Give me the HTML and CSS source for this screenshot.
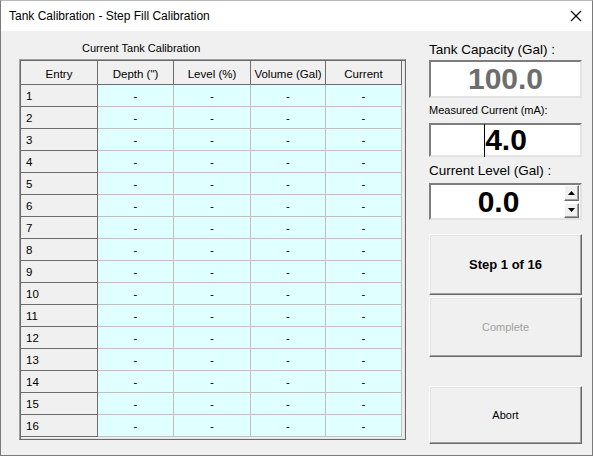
FILE: index.html
```html
<!DOCTYPE html>
<html lang="en">
<head>
    <meta charset="UTF-8">
    <link rel="stylesheet" href="styles.css">
    <title>Tank Calibration - Step Fill Calibration</title>
</head>
<body>
    <div class="window">
        <div class="titlebar">
            <span class="title">Tank Calibration - Step Fill Calibration</span>
            <svg class="close" width="12" height="12" viewBox="0 0 12 12">
                <path d="M1 1 L11 11 M11 1 L1 11" stroke="#000" stroke-width="1.1"/>
            </svg>
        </div>

        <div class="content">
            <div class="left">
                <div class="caption">Current Tank Calibration</div>
                <div class="grid-frame">
                    <div class="grid">
                        <div class="hd">Entry</div><div class="hd">Depth (")</div><div class="hd">Level (%)</div><div class="hd">Volume (Gal)</div><div class="hd">Current</div>
                        <div class="no">1</div><div class="cell">-</div><div class="cell">-</div><div class="cell">-</div><div class="cell">-</div>
                        <div class="no">2</div><div class="cell">-</div><div class="cell">-</div><div class="cell">-</div><div class="cell">-</div>
                        <div class="no">3</div><div class="cell">-</div><div class="cell">-</div><div class="cell">-</div><div class="cell">-</div>
                        <div class="no">4</div><div class="cell">-</div><div class="cell">-</div><div class="cell">-</div><div class="cell">-</div>
                        <div class="no">5</div><div class="cell">-</div><div class="cell">-</div><div class="cell">-</div><div class="cell">-</div>
                        <div class="no">6</div><div class="cell">-</div><div class="cell">-</div><div class="cell">-</div><div class="cell">-</div>
                        <div class="no">7</div><div class="cell">-</div><div class="cell">-</div><div class="cell">-</div><div class="cell">-</div>
                        <div class="no">8</div><div class="cell">-</div><div class="cell">-</div><div class="cell">-</div><div class="cell">-</div>
                        <div class="no">9</div><div class="cell">-</div><div class="cell">-</div><div class="cell">-</div><div class="cell">-</div>
                        <div class="no">10</div><div class="cell">-</div><div class="cell">-</div><div class="cell">-</div><div class="cell">-</div>
                        <div class="no">11</div><div class="cell">-</div><div class="cell">-</div><div class="cell">-</div><div class="cell">-</div>
                        <div class="no">12</div><div class="cell">-</div><div class="cell">-</div><div class="cell">-</div><div class="cell">-</div>
                        <div class="no">13</div><div class="cell">-</div><div class="cell">-</div><div class="cell">-</div><div class="cell">-</div>
                        <div class="no">14</div><div class="cell">-</div><div class="cell">-</div><div class="cell">-</div><div class="cell">-</div>
                        <div class="no">15</div><div class="cell">-</div><div class="cell">-</div><div class="cell">-</div><div class="cell">-</div>
                        <div class="no">16</div><div class="cell">-</div><div class="cell">-</div><div class="cell">-</div><div class="cell">-</div>
                    </div>
                </div>
            </div>

            <div class="right">
                <div class="label big">Tank Capacity (Gal) :</div>
                <div class="box value gray">100.0</div>

                <div class="label small">Measured Current (mA):</div>
                <div class="box value"><span class="caret"></span>4.0</div>

                <div class="label big lvl">Current Level (Gal) :</div>
                <div class="box spin">
                    <div class="value">0.0</div>
                    <div class="spin-btns">
                        <div class="spin-btn">
                            <svg width="7" height="4" viewBox="0 0 7 4"><path d="M3.5 0 L7 4 L0 4 Z" fill="#000"/></svg>
                        </div>
                        <div class="spin-btn">
                            <svg width="7" height="4" viewBox="0 0 7 4"><path d="M0 0 L7 0 L3.5 4 Z" fill="#000"/></svg>
                        </div>
                    </div>
                </div>

                <button class="btn step">Step 1 of 16</button>
                <button class="btn complete" disabled>Complete</button>
                <button class="btn abort">Abort</button>
            </div>
        </div>
    </div>
</body>
</html>
```

FILE: styles.css
```css
*{
    box-sizing: border-box;
}

body{
    margin: 0;
    background-color: #f0f0f0;
    font-family: "Liberation Sans", Arial, sans-serif;
}

.window{
    width: 593px;
    height: 456px;
    border: 1px solid #7a7a7a;
    border-top-color: #b9b9b9;
    background-color: #f0f0f0;
}

.titlebar{
    height: 30px;
    background-color: white;
    display: flex;
    align-items: center;
    justify-content: space-between;
    padding: 0 10px 0 8px;
}

.title{
    font-size: 12px;
    color: #000;
}

.content{
    display: flex;
    padding-top: 10px;
}

/* left side, the grid */
.left{
    margin-left: 18px;
}

.caption{
    font-size: 11px;
    height: 18px;
    line-height: 14px;
    padding-left: 63px;
    color: #000;
}

.grid-frame{
    border: 1px solid;
    border-color: #a0a0a0 #696969 #696969 #a0a0a0;
    padding: 1px 2px 2px 1px;
    box-shadow: inset 1px 1px #696969, inset -1px -1px #e3e3e3;
    width: 387px;
}

.grid{
    display: grid;
    grid-template-columns: 77px 76px 77px 75px 76px;
    grid-template-rows: 24px;
    grid-auto-rows: 22px;
    font-size: 11.5px;
}

.grid > div{
    border-right: 1px solid #c0c0c0;
    border-bottom: 1px solid #c0c0c0;
    display: flex;
    align-items: center;
    justify-content: center;
}

.grid .hd{
    background-color: #f0f0f0;
    border-color: #6d6d6d;
    padding-top: 2px;
}

.grid .no{
    background-color: #f0f0f0;
    border-color: #6d6d6d;
    justify-content: flex-start;
    padding-left: 5px;
    padding-top: 1px;
}

.grid .cell{
    background-color: #e0ffff;
}

/* right side */
.right{
    margin-left: 23px;
    width: 153px;
    display: flex;
    flex-direction: column;
}

.label{
    color: #000;
    white-space: nowrap;
}

.label.big{
    font-size: 13.5px;
    height: 18px;
    line-height: 18px;
}

.label.small{
    font-size: 11px;
    height: 23px;
    line-height: 23px;
    margin-top: 1px;
}

.label.lvl{
    margin-top: 3px;
    height: 22px;
    line-height: 22px;
}

.box{
    background-color: white;
    border: 2px solid;
    border-color: #7d7d7d #e3e3e3 #e3e3e3 #7d7d7d;
    height: 38px;
    margin-top: 1px;
}

.value{
    font-weight: bold;
    font-size: 30px;
    display: flex;
    align-items: center;
    justify-content: center;
    height: 34px;
    color: #000;
}

.value.gray{
    color: #6d6d6d;
    height: 38px;
}

.caret{
    display: inline-block;
    width: 1px;
    height: 33px;
    background-color: #000;
}

.spin{
    display: flex;
    height: 37px;
}

.spin .value{
    flex: 1;
    height: 33px;
    padding-left: 2px;
}

.spin-btns{
    display: flex;
    flex-direction: column;
    gap: 2px;
    padding: 0 1px 0 0;
}

.spin-btn{
    width: 15px;
    height: 16px;
    background-color: #f0f0f0;
    border: 1px solid;
    border-color: #fff #696969 #696969 #fff;
    box-shadow: inset -1px -1px #a0a0a0;
    display: flex;
    align-items: center;
    justify-content: center;
}

.btn{
    font-family: "Liberation Sans", Arial, sans-serif;
    background-color: #f0f0f0;
    border: 1px solid;
    border-color: #fff #696969 #696969 #fff;
    box-shadow: inset -1px -1px #a0a0a0, inset 1px 1px #e3e3e3;
    color: #000;
    padding: 0;
    width: 153px;
}

.btn.step{
    height: 61px;
    margin-top: 14px;
    font-weight: bold;
    font-size: 13px;
}

.btn.complete{
    height: 60px;
    margin-top: 2px;
    font-size: 11px;
    color: #a0a0a0;
}

.btn.abort{
    height: 58px;
    margin-top: 29px;
    font-size: 11px;
}
```
